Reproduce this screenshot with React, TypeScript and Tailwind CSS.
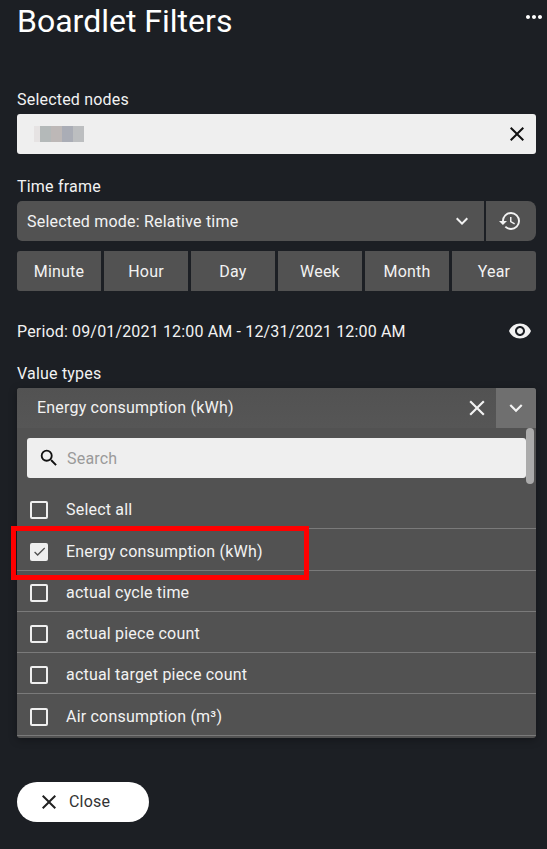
import { MdClose, MdExpandMore, MdHistory, MdMoreHoriz, MdSearch, MdVisibility, MdCheck } from "react-icons/md";

const units = ["Minute", "Hour", "Day", "Week", "Month", "Year"];
const valueTypes = [
  { label: "Select all", checked: false },
  { label: "Energy consumption (kWh)", checked: true },
  { label: "actual cycle time", checked: false },
  { label: "actual piece count", checked: false },
  { label: "actual target piece count", checked: false },
  { label: "Air consumption (m³)", checked: false },
];
const blurred = ["bg-[#e6e3e3]", "bg-[#b4b9b9]", "bg-[#bdb8b7]", "bg-[#aaadb6]", "bg-[#bcbec0]"];

function Label({ children }: { children: string }) {
  return <div className="h-[24px] pt-[1px] leading-[24px] text-[16px] tracking-[0.2px] text-[#f2f2f2]">{children}</div>;
}

export default function App() {
  return (
    <div className="relative h-[849px] w-[547px] overflow-hidden bg-[#1c1f24] pl-[17px] pr-[11px] font-['Roboto',sans-serif] tracking-[0.2px] text-[#f2f2f2]">
      <div className="flex h-[87px] items-start justify-between">
        <h1 className="mt-[3px] text-[32px] leading-[36px] tracking-normal text-white">Boardlet Filters</h1>
        <MdMoreHoriz className="mt-[5px] mr-[-10px] text-white" size={24} />
      </div>

      <Label>Selected nodes</Label>
      <div className="mt-[3px] flex h-[40px] items-center justify-between rounded-[3px] bg-[#efefef] pl-[17px] pr-[7px]">
        <div className="flex h-[16px] w-[50px]">
          {blurred.map((c, i) => (
            <div key={i} className={`h-full ${i === 0 ? "w-[6px]" : "w-[11px]"} ${c}`} />
          ))}
        </div>
        <MdClose className="text-[#111]" size={24} />
      </div>

      <div className="mt-[20px]">
        <Label>Time frame</Label>
      </div>
      <div className="mt-[3px] flex h-[40px] gap-[2px]">
        <div className="flex flex-1 items-center justify-between rounded-l-[5px] bg-[#525252] pl-[10px] pr-[10px]">
          <span className="pt-[1px] text-[16px]">Selected mode: Relative time</span>
          <MdExpandMore size={24} />
        </div>
        <div className="flex w-[50px] items-center justify-center rounded-r-[8px] bg-[#525252] pr-[2px]">
          <MdHistory size={24} />
        </div>
      </div>

      <div className="mt-[10px] flex h-[40px] gap-[3px]">
        {units.map((u, i) => (
          <div
            key={u}
            className={`flex flex-1 items-center justify-center bg-[#525252] pt-[1px] text-[16px] ${
              i === 0 ? "rounded-l-[3px]" : i === units.length - 1 ? "rounded-r-[3px]" : ""
            }`}
          >
            {u}
          </div>
        ))}
      </div>

      <div className="mt-[28px] flex h-[24px] items-center justify-between">
        <span className="pt-[1px] text-[16px] tracking-[0.16px]">Period: 09/01/2021 12:00 AM - 12/31/2021 12:00 AM</span>
        <MdVisibility className="mr-[4px]" size={24} />
      </div>

      <div className="mt-[18px]">
        <Label>Value types</Label>
      </div>
      <div className="relative mt-[3px] h-[350px] overflow-hidden rounded-[3px] bg-[#525252] shadow-[0_2px_8px_rgba(0,0,0,0.3)]">
        <div className="flex h-[40px] items-center bg-gradient-to-b from-[#525252] to-[#565656] pl-[20px]">
          <span className="flex-1 text-[16px]">Energy consumption (kWh)</span>
          <MdClose className="mr-[6px]" size={26} />
          <div className="flex h-full w-[40px] items-center justify-center bg-[#6f6f6f]">
            <MdExpandMore size={26} />
          </div>
        </div>

        <div className="mx-[10px] mt-[10px] flex h-[40px] items-center rounded-[3px] bg-[#efefef] pl-[11px]">
          <MdSearch className="text-[#111]" size={22} />
          <span className="ml-[7px] pt-[1px] text-[16px] text-[#9a9a9a]">Search</span>
        </div>

        <div className="mt-[10px]">
          {valueTypes.map((v) => (
            <div
              key={v.label}
              className="flex h-[41.3px] items-center border-b border-[#7a7a7a] pl-[13px] pt-[4.2px]"
            >
              {v.checked ? (
                <div className="flex h-[18px] w-[18px] items-center justify-center rounded-[2px] bg-[#efefef]">
                  <MdCheck className="text-[#525252]" size={15} />
                </div>
              ) : (
                <div className="h-[18px] w-[18px] rounded-[2px] border-2 border-[#efefef]" />
              )}
              <span className="ml-[18px] text-[16px]">{v.label}</span>
            </div>
          ))}
        </div>

        <div className="absolute right-[2px] top-[40px] h-[56px] w-[8px] rounded-[4px] bg-[#ababab]" />
      </div>

      <button className="mt-[44px] flex h-[40px] w-[132px] items-center rounded-[20px] bg-white pl-[20px] text-[16px] text-[#333]">
        <MdClose className="text-[#222]" size={24} />
        <span className="ml-[8px]">Close</span>
      </button>

      <div className="absolute left-[11px] top-[526px] h-[54px] w-[298px] border-[5px] border-[#f00]" />
    </div>
  );
}
